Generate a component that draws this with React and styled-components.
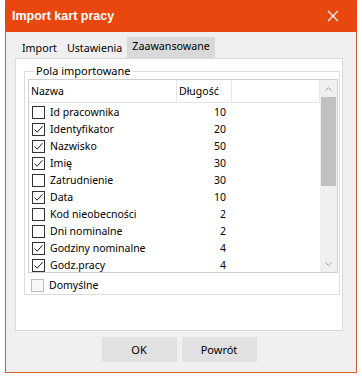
import React from "react";
import styled, { createGlobalStyle } from "styled-components";

const GlobalStyle = createGlobalStyle`
  html, body {
    margin: 0;
    padding: 0;
    background: #ffffff;
  }
  body {
    font-family: "Noto Sans", "DejaVu Sans", sans-serif;
    font-size: 10.5px;
    color: #000;
  }
`;

const fields = [
  { name: "Id pracownika", len: 10, on: false },
  { name: "Identyfikator", len: 20, on: true },
  { name: "Nazwisko", len: 50, on: true },
  { name: "Imię", len: 30, on: true },
  { name: "Zatrudnienie", len: 30, on: false },
  { name: "Data", len: 10, on: true },
  { name: "Kod nieobecności", len: 2, on: false },
  { name: "Dni nominalne", len: 2, on: false },
  { name: "Godziny nominalne", len: 4, on: true },
  { name: "Godz.pracy", len: 4, on: true },
];

function CheckBox({ checked, disabled }) {
  return (
    <Box $disabled={disabled}>
      {checked && (
        <svg width="11" height="11" viewBox="0 0 11 11">
          <path d="M1.5 5.5 L4.2 8.2 L9.5 2.2" fill="none" stroke="#222" strokeWidth="1" />
        </svg>
      )}
    </Box>
  );
}

export default function App() {
  return (
    <>
      <GlobalStyle />
      <Window>
        <TitleBar>
          <Title>Import kart pracy</Title>
          <Close>
            <svg width="12" height="12" viewBox="0 0 12 12">
              <path d="M1 1 L11 11 M11 1 L1 11" stroke="#fff" strokeWidth="1.2" />
            </svg>
          </Close>
        </TitleBar>
        <Body>
          <Tabs>
            <Tab>Import</Tab>
            <Tab>Ustawienia</Tab>
            <Tab $active>Zaawansowane</Tab>
          </Tabs>
          <Panel>
            <Group>
              <Legend>Pola importowane</Legend>
              <List>
                <ListMain>
                  <HeaderRow>
                    <HeadCell>Nazwa</HeadCell>
                    <HeadCell>Długość</HeadCell>
                    <HeadCell />
                  </HeaderRow>
                  {fields.map((f) => (
                    <Row key={f.name}>
                      <NameCell>
                        <CheckBox checked={f.on} />
                        {f.name}
                      </NameCell>
                      <LenCell>{f.len}</LenCell>
                    </Row>
                  ))}
                </ListMain>
                <ScrollBar>
                  <Arrow>
                    <svg width="7" height="4" viewBox="0 0 7 4">
                      <path d="M0.5 3.5 L3.5 0.5 L6.5 3.5" fill="none" stroke="#a0a0a0" />
                    </svg>
                  </Arrow>
                  <Track>
                    <Thumb />
                  </Track>
                  <Arrow>
                    <svg width="7" height="4" viewBox="0 0 7 4">
                      <path d="M0.5 0.5 L3.5 3.5 L6.5 0.5" fill="none" stroke="#a0a0a0" />
                    </svg>
                  </Arrow>
                </ScrollBar>
              </List>
              <DefaultRow>
                <CheckBox disabled />
                Domyślne
              </DefaultRow>
            </Group>
          </Panel>
          <Buttons>
            <Button>OK</Button>
            <Button>Powrót</Button>
          </Buttons>
        </Body>
      </Window>
    </>
  );
}

const Window = styled.div`
  margin-left: 5px;
  width: 352px;
  height: 373px;
  box-sizing: border-box;
  background: #f0f0f0;
  border: 1px solid #d0602f;
  border-top: none;
  display: flex;
  flex-direction: column;
`;

const TitleBar = styled.div`
  height: 32px;
  margin: 0 -1px;
  background: #e9470d;
  display: flex;
  align-items: center;
  justify-content: space-between;
  padding: 0 18px 0 7px;
  flex-shrink: 0;
`;

const Title = styled.div`
  font-family: "Liberation Sans", Arial, sans-serif;
  font-weight: bold;
  font-size: 12.5px;
  color: #fff;
  margin-top: -1px;
`;

const Close = styled.div`
  display: flex;
  align-items: center;
`;

const Body = styled.div`
  flex: 1;
  display: flex;
  flex-direction: column;
  padding: 5px 0 0 9px;
`;

const Tabs = styled.div`
  display: flex;
  align-items: flex-end;
  height: 21px;
  padding-left: 2px;
`;

const Tab = styled.div`
  height: ${(p) => (p.$active ? "21px" : "19px")};
  line-height: 19px;
  padding: 0 5px;
  background: ${(p) => (p.$active ? "#d9d9d9" : "#f0f0f0")};
  box-sizing: border-box;
  white-space: nowrap;
  font-size: 10.7px;
`;

const Panel = styled.div`
  width: 328px;
  height: 273px;
  box-sizing: border-box;
  background: #fff;
  border: 1px solid #d9d9d9;
  padding: 12px 2px 0 8px;
`;

const Group = styled.div`
  position: relative;
  height: 224px;
  box-sizing: border-box;
  border: 1px solid #dcdcdc;
  padding: 7px 1px 0 3px;
`;

const Legend = styled.div`
  position: absolute;
  top: -9px;
  left: 9px;
  padding: 0 2px;
  background: #fff;
  line-height: 16px;
  font-size: 11px;
`;

const List = styled.div`
  height: 194px;
  box-sizing: border-box;
  border: 1px solid #d0d0d0;
  display: flex;
  overflow: hidden;
`;

const ListMain = styled.div`
  flex: 1;
  overflow: hidden;
`;

const HeaderRow = styled.div`
  display: grid;
  grid-template-columns: 148px 55px 1fr;
  height: 23px;
  border-bottom: 1px solid #e5e5e5;
  box-sizing: border-box;
  margin-bottom: 1px;
`;

const HeadCell = styled.div`
  border-right: 1px solid #e5e5e5;
  padding-left: 2px;
  line-height: 22px;
`;

const Row = styled.div`
  display: grid;
  grid-template-columns: 148px 55px 1fr;
  height: 17px;
  line-height: 13px;
  align-items: center;
`;

const NameCell = styled.div`
  display: flex;
  align-items: center;
  gap: 5px;
  padding-left: 3px;
  white-space: nowrap;
`;

const LenCell = styled.div`
  text-align: right;
  padding-right: 6px;
`;

const Box = styled.span`
  width: 13px;
  height: 13px;
  box-sizing: border-box;
  border: 1px solid ${(p) => (p.$disabled ? "#bcbcbc" : "#333")};
  background: ${(p) => (p.$disabled ? "#f7f7f7" : "#fff")};
  display: inline-flex;
  align-items: center;
  justify-content: center;
  flex-shrink: 0;
`;

const ScrollBar = styled.div`
  width: 17px;
  background: #f0f0f0;
  display: flex;
  flex-direction: column;
`;

const Arrow = styled.div`
  height: 17px;
  display: flex;
  align-items: center;
  justify-content: center;
`;

const Track = styled.div`
  flex: 1;
  display: flex;
  justify-content: center;
`;

const Thumb = styled.div`
  width: 15px;
  height: 89px;
  background: #c1c1c1;
`;

const DefaultRow = styled.div`
  display: flex;
  align-items: center;
  gap: 5px;
  padding-left: 3px;
  height: 18px;
  margin-top: 3px;
`;

const Buttons = styled.div`
  display: flex;
  justify-content: center;
  gap: 5px;
  margin-top: 6px;
  padding-right: 13px;
`;

const Button = styled.div`
  width: 75px;
  height: 25px;
  background: #e1e1e1;
  display: flex;
  align-items: center;
  justify-content: center;
  font-size: 11px;
`;
